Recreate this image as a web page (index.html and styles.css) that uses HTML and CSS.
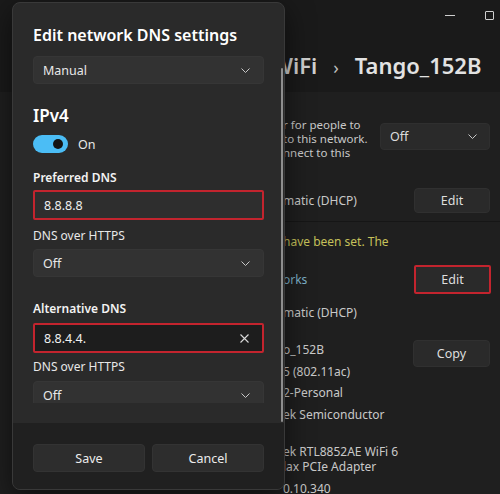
FILE: index.html
```html
<!DOCTYPE html>
<html lang="en">
<head>
<meta charset="utf-8">
<title>Edit network DNS settings</title>
<link rel="stylesheet" href="styles.css">
</head>
<body>
<div class="window">
  <header class="titlebar">
    <span class="cap cap-min"></span>
    <span class="cap cap-max"></span>
  </header>
  <div class="crumb">
    <span class="crumb-parent">WiFi</span>
    <span class="crumb-sep">›</span>
    <span class="crumb-current">Tango_152B</span>
  </div>
  <main class="rows">
    <section class="row row-random">
      <div class="desc">
        <p>r for people to</p>
        <p>to this network.</p>
        <p>nnect to this</p>
      </div>
      <div class="bg-select">
        <span>Off</span>
        <svg class="chev" width="9" height="5" viewBox="0 0 9 5"><polyline points="0.5,0.5 4.5,4.5 8.5,0.5" fill="none" stroke="#c8c8c8" stroke-width="1"/></svg>
      </div>
    </section>
    <section class="row row-ip">
      <p>matic (DHCP)</p>
      <button class="btn">Edit</button>
    </section>
    <section class="row-dns">
      <p class="warn">have been set. The</p>
      <div class="dns-line">
        <span class="link">orks</span>
        <button class="btn btn-marked">Edit</button>
      </div>
      <p class="dns-value">matic (DHCP)</p>
    </section>
    <section class="props">
      <div class="props-values">
        <p>o_152B</p>
        <p>5 (802.11ac)</p>
        <p>2-Personal</p>
        <p>ek Semiconductor<br>&nbsp;</p>
        <p>ek RTL8852AE WiFi 6<br>lax PCIe Adapter</p>
        <p>0.10.340</p>
      </div>
      <button class="btn btn-copy">Copy</button>
    </section>
  </main>

  <div class="dialog" role="dialog" aria-label="Edit network DNS settings">
    <div class="dialog-body">
      <div class="dialog-scroll">
        <h2 class="dialog-title">Edit network DNS settings</h2>
        <div class="select select-mode">
          <span>Manual</span>
          <svg class="chev" width="9" height="5" viewBox="0 0 9 5"><polyline points="0.5,0.5 4.5,4.5 8.5,0.5" fill="none" stroke="#c8c8c8" stroke-width="1"/></svg>
        </div>
        <h3 class="section-title">IPv4</h3>
        <div class="toggle-row">
          <span class="toggle"><span class="knob"></span></span>
          <span class="toggle-text">On</span>
        </div>
        <div class="field-label">Preferred DNS</div>
        <div class="input input-marked">
          <span>8.8.8.8</span>
        </div>
        <div class="field-sub">DNS over HTTPS</div>
        <div class="select">
          <span>Off</span>
          <svg class="chev" width="9" height="5" viewBox="0 0 9 5"><polyline points="0.5,0.5 4.5,4.5 8.5,0.5" fill="none" stroke="#c8c8c8" stroke-width="1"/></svg>
        </div>
        <div class="field-label field-label-gap">Alternative DNS</div>
        <div class="input input-marked input-focus">
          <span>8.8.4.4.</span>
          <svg class="clear" width="9" height="9" viewBox="0 0 9 9"><path d="M0.5 0.5 L8.5 8.5 M8.5 0.5 L0.5 8.5" stroke="#d8d8d8" stroke-width="1.1" fill="none"/></svg>
        </div>
        <div class="field-sub field-sub-tight">DNS over HTTPS</div>
        <div class="select select-last">
          <span>Off</span>
          <svg class="chev" width="9" height="5" viewBox="0 0 9 5"><polyline points="0.5,0.5 4.5,4.5 8.5,0.5" fill="none" stroke="#c8c8c8" stroke-width="1"/></svg>
        </div>
      </div>
      <span class="scrollbar"></span>
    </div>
    <footer class="dialog-footer">
      <button class="dbtn">Save</button>
      <button class="dbtn">Cancel</button>
    </footer>
  </div>
</div>
</body>
</html>
```

FILE: styles.css
```css
* { box-sizing: border-box; }

html, body {
  margin: 0;
  padding: 0;
}

body {
  width: 500px;
  height: 494px;
  overflow: hidden;
  background: #1b1b1b;
  font-family: "Noto Sans", "Open Sans", sans-serif;
  color: #e4e4e4;
}

p { margin: 0; }

button {
  font-family: inherit;
  cursor: default;
}

.window {
  position: relative;
  width: 500px;
  height: 494px;
  display: flex;
  flex-direction: column;
  overflow: hidden;
}

/* ---------- title bar ---------- */
.titlebar {
  flex-shrink: 0;
  height: 30px;
  background: #1a1a1a;
  display: flex;
  justify-content: flex-end;
  align-items: center;
  gap: 30px;
  padding-right: 6px;
}

.cap-min {
  width: 10px;
  height: 1px;
  background: #cfcfcf;
}

.cap-max {
  width: 9px;
  height: 9px;
  border: 1px solid #cfcfcf;
  border-radius: 1px;
}

/* ---------- breadcrumb ---------- */
.crumb {
  flex-shrink: 0;
  height: 62px;
  background: #1a1a1a;
  display: flex;
  align-items: baseline;
  gap: 14px;
  padding-left: 272px;
  padding-top: 20px;
  font-size: 22px;
  line-height: 30px;
  font-weight: 600;
  color: #e2e2e2;
  white-space: nowrap;
}

.crumb-parent { color: #d0d0d0; }

.crumb-sep {
  font-size: 18px;
  font-weight: 400;
  color: #c0c0c0;
  margin: 0 2px 0 2px;
}

/* ---------- settings rows ---------- */
.rows {
  flex: 1;
  min-height: 0;
  overflow: hidden;
  background: #1f1f1f;
  padding: 0 10px 0 283px;
  font-size: 12px;
  color: #c9c9c9;
  white-space: nowrap;
}

.row {
  display: flex;
  align-items: center;
  justify-content: space-between;
}

.row-random {
  height: 88px;
}

.desc {
  display: flex;
  flex-direction: column;
  gap: 1px;
  padding-top: 4px;
}

.desc p {
  font-size: 11.5px;
  line-height: 13px;
}

.bg-select {
  width: 110px;
  height: 27px;
  background: #2a2a2a;
  border: 1px solid #2f2f2f;
  border-radius: 4px;
  display: flex;
  align-items: center;
  justify-content: space-between;
  padding: 0 12px 0 9px;
  font-size: 12.5px;
  color: #dcdcdc;
}

.row-ip {
  height: 42px;
  border-bottom: 1px solid #161616;
  margin-right: -10px;
  padding-right: 10px;
  margin-left: -10px;
  padding-left: 10px;
}

.btn {
  width: 76px;
  height: 25px;
  background: #2a2a2a;
  border: 1px solid #303030;
  border-radius: 4px;
  color: #dedede;
  font-size: 12.5px;
  padding: 0;
}

.row-dns {
  padding-top: 12px;
}

.warn {
  color: #c6c15a;
  line-height: 16px;
}

.dns-line {
  display: flex;
  align-items: center;
  justify-content: space-between;
  margin-top: 15px;
}

.link {
  color: #7fb4cc;
}

.btn-marked {
  width: 77px;
  height: 29px;
  border: 2px solid #c3242e;
  border-radius: 2px;
  margin-right: -1px;
}

.dns-value {
  margin-top: 11px;
  line-height: 16px;
}

.props {
  display: flex;
  justify-content: space-between;
  align-items: flex-start;
  margin-top: 21px;
}

.props-values p {
  line-height: 15.5px;
  margin-bottom: 6px;
}

.btn-copy {
  width: 77px;
  height: 27px;
  margin-top: -2px;
}

/* ---------- dialog ---------- */
.dialog {
  position: absolute;
  left: 12px;
  top: 2px;
  width: 273px;
  height: 488px;
  background: #2a2a2a;
  border: 1px solid #393939;
  border-radius: 8px;
  overflow: hidden;
  display: flex;
  flex-direction: column;
  box-shadow: 0 8px 28px rgba(0, 0, 0, 0.55);
}

.dialog-body {
  position: relative;
  flex-shrink: 0;
  height: 420px;
  padding-bottom: 20px;
}

.dialog-scroll {
  height: 400px;
  overflow: hidden;
  padding: 0 20px;
}

.dialog-title {
  margin: 21px 0 0;
  font-size: 16px;
  line-height: 22px;
  font-weight: 600;
  color: #ffffff;
  white-space: nowrap;
}

.select {
  height: 28px;
  background: #323232;
  border: 1px solid #363636;
  border-radius: 4px;
  display: flex;
  align-items: center;
  justify-content: space-between;
  padding: 0 13px 0 9px;
  font-size: 12.5px;
  color: #e8e8e8;
  margin-top: 5px;
}

.select-mode {
  margin-top: 10px;
}

.section-title {
  margin: 20px 0 0;
  font-size: 17px;
  line-height: 24px;
  font-weight: 600;
  color: #ffffff;
}

.toggle-row {
  display: flex;
  align-items: center;
  gap: 10px;
  margin-top: 7px;
  height: 18px;
}

.toggle {
  width: 35px;
  height: 18px;
  border-radius: 9px;
  background: #4bbdf5;
  display: flex;
  align-items: center;
  justify-content: flex-end;
  padding-right: 5px;
}

.knob {
  width: 10px;
  height: 10px;
  border-radius: 50%;
  background: #141414;
}

.toggle-text {
  font-size: 12.5px;
  color: #e8e8e8;
}

.field-label {
  margin-top: 17px;
  font-size: 12px;
  line-height: 16px;
  font-weight: 600;
  color: #f2f2f2;
}

.field-label-gap {
  margin-top: 24px;
}

.field-sub {
  margin-top: 8px;
  font-size: 12px;
  line-height: 16px;
  color: #e8e8e8;
}

.field-sub-tight {
  margin-top: 6px;
}

.input {
  height: 30px;
  margin-top: 4px;
  background: #2e2e2e;
  display: flex;
  align-items: center;
  justify-content: space-between;
  padding: 0 13px 0 9px;
  font-size: 12.5px;
  color: #f0f0f0;
}

.input-marked {
  border: 2px solid #c3242e;
  border-radius: 2px;
}

.input-focus {
  background: #1d1d1d;
  margin-top: 6px;
}

.select-last {
  margin-top: 6px;
}

.scrollbar {
  position: absolute;
  right: 1px;
  top: 65px;
  width: 2px;
  height: 354px;
  border-radius: 1px;
  background: #8e8e8e;
}

.dialog-footer {
  flex: 1;
  background: #202020;
  display: grid;
  grid-template-columns: 1fr 1fr;
  gap: 7px;
  padding: 21px 20px 17px;
}

.dbtn {
  height: 28px;
  background: #2d2d2d;
  border: 1px solid #333333;
  border-radius: 4px;
  color: #ececec;
  font-size: 12.5px;
  padding: 0;
}
```
